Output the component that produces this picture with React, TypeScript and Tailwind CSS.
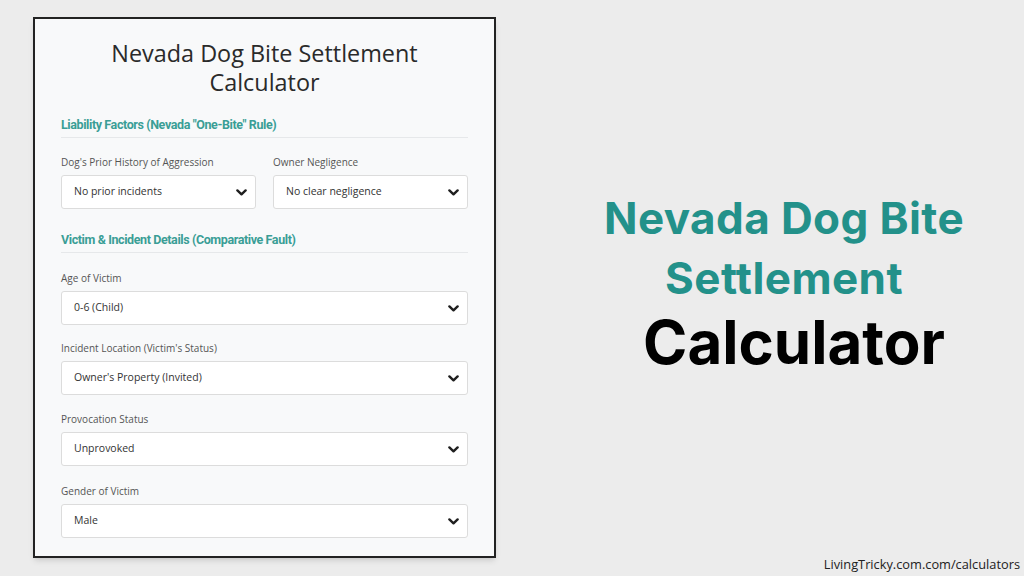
import React from "react";

const Chevron: React.FC = () => (
  <svg width="11" height="7" viewBox="0 0 11 7" className="shrink-0">
    <path d="M1.4 1.4 L5.5 5.3 L9.6 1.4" fill="none" stroke="#1f1f1f" strokeWidth="2.4" strokeLinecap="round" strokeLinejoin="round" />
  </svg>
);

const Field: React.FC<{ label: string; value: string; className?: string }> = ({ label, value, className }) => (
  <div className={className}>
    <div className="text-[10px] leading-[14px] text-[#555]">{label}</div>
    <div className="mt-[6px] h-[34px] bg-white border border-[#dcdcdc] rounded-[3px] flex items-center justify-between pl-[12px] pr-[8px]">
      <span className="text-[10.5px] text-[#333]">{value}</span>
      <Chevron />
    </div>
  </div>
);

const SectionHead: React.FC<{ text: string; className?: string }> = ({ text, className }) => (
  <div
    className={`text-[12.5px] leading-[16px] font-bold tracking-[-0.4px] text-[#3a9e96] pb-[4px] border-b border-[#e6e8ea] ${className || ""}`}
    style={{ fontFamily: 'Roboto, "Liberation Sans", sans-serif' }}
  >
    {text}
  </div>
);

export default function App() {
  return (
    <div
      className="w-[1024px] h-[576px] bg-[#ececec] flex overflow-hidden"
      style={{ fontFamily: '"Open Sans", "Noto Sans", sans-serif' }}
    >
      <div className="pt-[17px] pl-[33px]">
        <div className="w-[463px] h-[541px] border-2 border-[#222] bg-[#f8f9fa] shadow-md px-[26px] pt-[20px]">
          <h1 className="text-center text-[23.4px] leading-[29px] font-medium text-[#2a2a2a]">
            Nevada Dog Bite Settlement
            <br />
            Calculator
          </h1>

          <SectionHead text={'Liability Factors (Nevada "One-Bite" Rule)'} className="mt-[20px]" />
          <div className="mt-[17px] grid grid-cols-2 gap-[17px]">
            <Field label="Dog's Prior History of Aggression" value="No prior incidents" />
            <Field label="Owner Negligence" value="No clear negligence" />
          </div>

          <SectionHead text="Victim & Incident Details (Comparative Fault)" className="mt-[23px]" />
          <Field className="mt-[18px]" label="Age of Victim" value="0-6 (Child)" />
          <Field className="mt-[16px]" label="Incident Location (Victim's Status)" value="Owner's Property (Invited)" />
          <Field className="mt-[17px]" label="Provocation Status" value="Unprovoked" />
          <Field className="mt-[18px]" label="Gender of Victim" value="Male" />
        </div>
      </div>

      <div className="flex-1 flex flex-col">
        <div className="flex-1 pl-[48px] pt-[188px] text-center" style={{ fontFamily: "Inter, sans-serif" }}>
          <div className="text-[44px] leading-[60px] font-bold tracking-[0.4px] text-[#23918a]">Nevada Dog Bite</div>
          <div className="text-[44px] leading-[60px] font-bold tracking-[0.4px] text-[#23918a]">Settlement</div>
          <div className="mt-[1px] pl-[20px] text-[60px] leading-[66px] font-bold text-black">Calculator</div>
        </div>
        <div className="text-right pr-[4px] pb-[4px] text-[12.8px] leading-[16px] text-[#222]">
          LivingTricky.com.com/calculators
        </div>
      </div>
    </div>
  );
}
